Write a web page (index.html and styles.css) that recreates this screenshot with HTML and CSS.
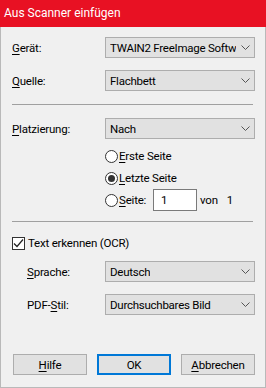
FILE: index.html
```html
<!DOCTYPE html>
<html lang="de">
<head>
    <meta charset="UTF-8">
    <meta name="viewport" content="width=device-width, initial-scale=1.0">
    <title>Aus Scanner einfügen</title>
    <link rel="stylesheet" href="styles.css">
</head>
<body>
    <div class="dialog">
        <div class="titlebar">Aus Scanner einfügen</div>

        <div class="dialog-body">
            <div class="field">
                <label><u>G</u>erät:</label>
                <div class="select">
                    <span class="select-text">TWAIN2 FreeImage Softw</span>
                    <svg class="chevron" width="9" height="5" viewBox="0 0 9 5"><polyline points="0.5,0.5 4.5,4.5 8.5,0.5" fill="none" stroke="#555" stroke-width="1"/></svg>
                </div>
            </div>
            <div class="field">
                <label><u>Q</u>uelle:</label>
                <div class="select">
                    <span class="select-text">Flachbett</span>
                    <svg class="chevron" width="9" height="5" viewBox="0 0 9 5"><polyline points="0.5,0.5 4.5,4.5 8.5,0.5" fill="none" stroke="#555" stroke-width="1"/></svg>
                </div>
            </div>

            <div class="separator"></div>

            <div class="field">
                <label><u>P</u>latzierung:</label>
                <div class="select">
                    <span class="select-text">Nach</span>
                    <svg class="chevron" width="9" height="5" viewBox="0 0 9 5"><polyline points="0.5,0.5 4.5,4.5 8.5,0.5" fill="none" stroke="#555" stroke-width="1"/></svg>
                </div>
            </div>

            <div class="options">
                <div class="option">
                    <span class="radio"></span>
                    <span><u>E</u>rste Seite</span>
                </div>
                <div class="option">
                    <span class="radio checked"></span>
                    <span><u>L</u>etzte Seite</span>
                </div>
                <div class="option">
                    <span class="radio"></span>
                    <span class="page-label"><u>S</u>eite:</span>
                    <span class="page-input">1</span>
                    <span class="page-of">von</span>
                    <span>1</span>
                </div>
            </div>

            <div class="separator sep-ocr"></div>

            <div class="check-row">
                <span class="checkbox">
                    <svg width="11" height="11" viewBox="0 0 11 11"><polyline points="1,5.5 4,8.5 10,1.5" fill="none" stroke="#222" stroke-width="1.2"/></svg>
                </span>
                <span>Text erkennen (OCR)</span>
            </div>

            <div class="field sub first-sub">
                <label><u>S</u>prache:</label>
                <div class="select">
                    <span class="select-text">Deutsch</span>
                    <svg class="chevron" width="9" height="5" viewBox="0 0 9 5"><polyline points="0.5,0.5 4.5,4.5 8.5,0.5" fill="none" stroke="#555" stroke-width="1"/></svg>
                </div>
            </div>
            <div class="field sub">
                <label>PDF-<u>S</u>til:</label>
                <div class="select">
                    <span class="select-text">Durchsuchbares Bild</span>
                    <svg class="chevron" width="9" height="5" viewBox="0 0 9 5"><polyline points="0.5,0.5 4.5,4.5 8.5,0.5" fill="none" stroke="#555" stroke-width="1"/></svg>
                </div>
            </div>

            <div class="buttons">
                <button class="btn"><u>H</u>ilfe</button>
                <button class="btn btn-default">OK</button>
                <button class="btn"><u>A</u>bbrechen</button>
            </div>
        </div>
    </div>
</body>
</html>
```

FILE: styles.css
```css
* {
    margin: 0;
    padding: 0;
    box-sizing: border-box;
}

body {
    font-family: Roboto, "Noto Sans", sans-serif;
    font-size: 11.5px;
    letter-spacing: -0.2px;
    color: #000;
    background-color: #f0f0f0;
}

.dialog {
    width: 266px;
    height: 388px;
    display: flex;
    flex-direction: column;
}

.titlebar {
    height: 27px;
    line-height: 26px;
    padding-left: 4px;
    font-size: 12px;
    letter-spacing: 0;
    background-color: #e81123;
    color: #fff;
}

.dialog-body {
    flex: 1;
    display: flex;
    flex-direction: column;
    padding: 10px 10px 12px 11px;
    border: 1px solid #b9b9b9;
    border-top: none;
    background-color: #f0f0f0;
}

u {
    text-decoration: underline;
    text-underline-offset: 2px;
}

.field {
    display: grid;
    grid-template-columns: 93px 150px;
    align-items: center;
    height: 21px;
}

.field + .field {
    margin-top: 12px;
}

.field.sub {
    grid-template-columns: 78px 150px;
    padding-left: 15px;
}

.field.first-sub {
    margin-top: 7px;
}

.select {
    height: 21px;
    display: flex;
    align-items: center;
    justify-content: space-between;
    padding: 0 4px 0 4px;
    background-color: #e1e1e1;
    border: 1px solid #adadad;
}

.select-text {
    white-space: nowrap;
    overflow: hidden;
    letter-spacing: -0.25px;
}

.chevron {
    flex-shrink: 0;
    margin-left: 2px;
}

.separator {
    width: 241px;
    height: 1px;
    margin: 13px 0;
    background-color: #a0a0a0;
}

.separator.sep-ocr {
    margin: 10px 0 10px;
}

.options {
    margin: 6px 0 0 93px;
}

.option {
    display: flex;
    align-items: center;
    height: 22px;
}

.radio {
    width: 13px;
    height: 13px;
    margin-right: 1px;
    border: 1px solid #333;
    border-radius: 50%;
    background-color: #fff;
    display: flex;
    align-items: center;
    justify-content: center;
    flex-shrink: 0;
}

.radio.checked::after {
    content: "";
    width: 7px;
    height: 7px;
    border-radius: 50%;
    background-color: #333;
}

.page-label {
    width: 34px;
}

.page-input {
    width: 44px;
    height: 22px;
    line-height: 20px;
    padding-left: 7px;
    border: 1px solid #7a7a7a;
    background-color: #fff;
}

.page-of {
    margin: 0 9px 0 3px;
}

.check-row {
    display: flex;
    align-items: center;
    height: 22px;
}

.checkbox {
    width: 13px;
    height: 13px;
    margin-right: 3px;
    border: 1px solid #333;
    background-color: #fff;
    display: flex;
    align-items: center;
    justify-content: center;
}

.buttons {
    margin-top: auto;
    margin-left: 1px;
    display: flex;
    gap: 10px;
}

.btn {
    width: 74px;
    height: 21px;
    font-family: inherit;
    font-size: inherit;
    letter-spacing: inherit;
    color: #000;
    background-color: #e1e1e1;
    border: 1px solid #adadad;
}

.btn-default {
    border: 2px solid #0078d7;
}
```
